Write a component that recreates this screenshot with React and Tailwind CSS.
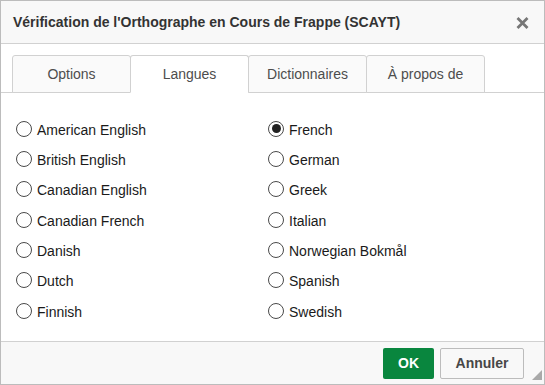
import React from "react";

const left = ["American English", "British English", "Canadian English", "Canadian French", "Danish", "Dutch", "Finnish"];
const right = ["French", "German", "Greek", "Italian", "Norwegian Bokmål", "Spanish", "Swedish"];
const tabs = ["Options", "Langues", "Dictionnaires", "À propos de"];

function Radio({ label, checked }) {
  return (
    <div className="flex h-[30.33px] items-center">
      <span className="relative -mt-[3px] flex h-[16px] w-[16px] items-center justify-center rounded-full border border-[#4a4a4a] bg-white">
        {checked && <span className="h-[9px] w-[9px] rounded-full bg-[#222]" />}
      </span>
      <span className="ml-[5px] text-[14px] text-[#1a1a1a]">{label}</span>
    </div>
  );
}

export default function App() {
  return (
    <div className="flex h-[385px] w-[545px] flex-col border border-[#bcbcbc] bg-white font-['Liberation_Sans',Arial,sans-serif]">
      {/* header */}
      <div className="flex h-[43px] items-center justify-between border-b border-[#d1d1d1] bg-[#f8f8f8] pl-[12px] pr-[15px]">
        <span className="text-[14px] font-bold text-[#333]">Vérification de l'Orthographe en Cours de Frappe (SCAYT)</span>
        <svg width="13" height="12" viewBox="0 0 13 12" className="mt-[1px]">
          <path d="M1.5 1 L11.5 11 M11.5 1 L1.5 11" stroke="#777" strokeWidth="2.8" strokeLinecap="butt" />
        </svg>
      </div>

      {/* tabs */}
      <div className="flex border-b border-[#d1d1d1] pl-[11px] pt-[11px]">
        {tabs.map((t, i) => {
          const active = i === 1;
          return (
            <div
              key={t}
              className={
                "-mb-px flex h-[38px] w-[119px] items-center justify-center rounded-t-[3px] border text-[14px] text-[#4d4d4d] " +
                (i > 0 ? "-ml-px " : "") +
                (active ? "border-[#d1d1d1] border-b-white bg-white" : "border-[#d1d1d1] bg-[#fafafa]")
              }
            >
              {t}
            </div>
          );
        })}
      </div>

      {/* body */}
      <div className="flex flex-1 pt-[22px]">
        <div className="w-[267px] pl-[15px]">
          {left.map((l) => (
            <Radio key={l} label={l} />
          ))}
        </div>
        <div>
          {right.map((l) => (
            <Radio key={l} label={l} checked={l === "French"} />
          ))}
        </div>
      </div>

      {/* footer */}
      <div className="relative flex h-[43px] items-start justify-end gap-[6px] border-t border-[#d1d1d1] bg-[#f8f8f8] pr-[20px] pt-[6px]">
        <button className="flex h-[31px] w-[51px] items-center justify-center rounded-[2px] bg-[#09863e] text-[14px] font-bold text-white">
          OK
        </button>
        <button className="flex h-[31px] w-[84px] items-center justify-center rounded-[2px] border border-[#bcbcbc] bg-[#f8f8f8] text-[14px] font-bold text-[#474747]">
          Annuler
        </button>
        <svg width="10" height="10" viewBox="0 0 10 10" className="absolute bottom-[4px] right-[2px]">
          <path d="M10 0 L10 10 L0 10 Z" fill="#a9a9a9" />
        </svg>
      </div>
    </div>
  );
}
